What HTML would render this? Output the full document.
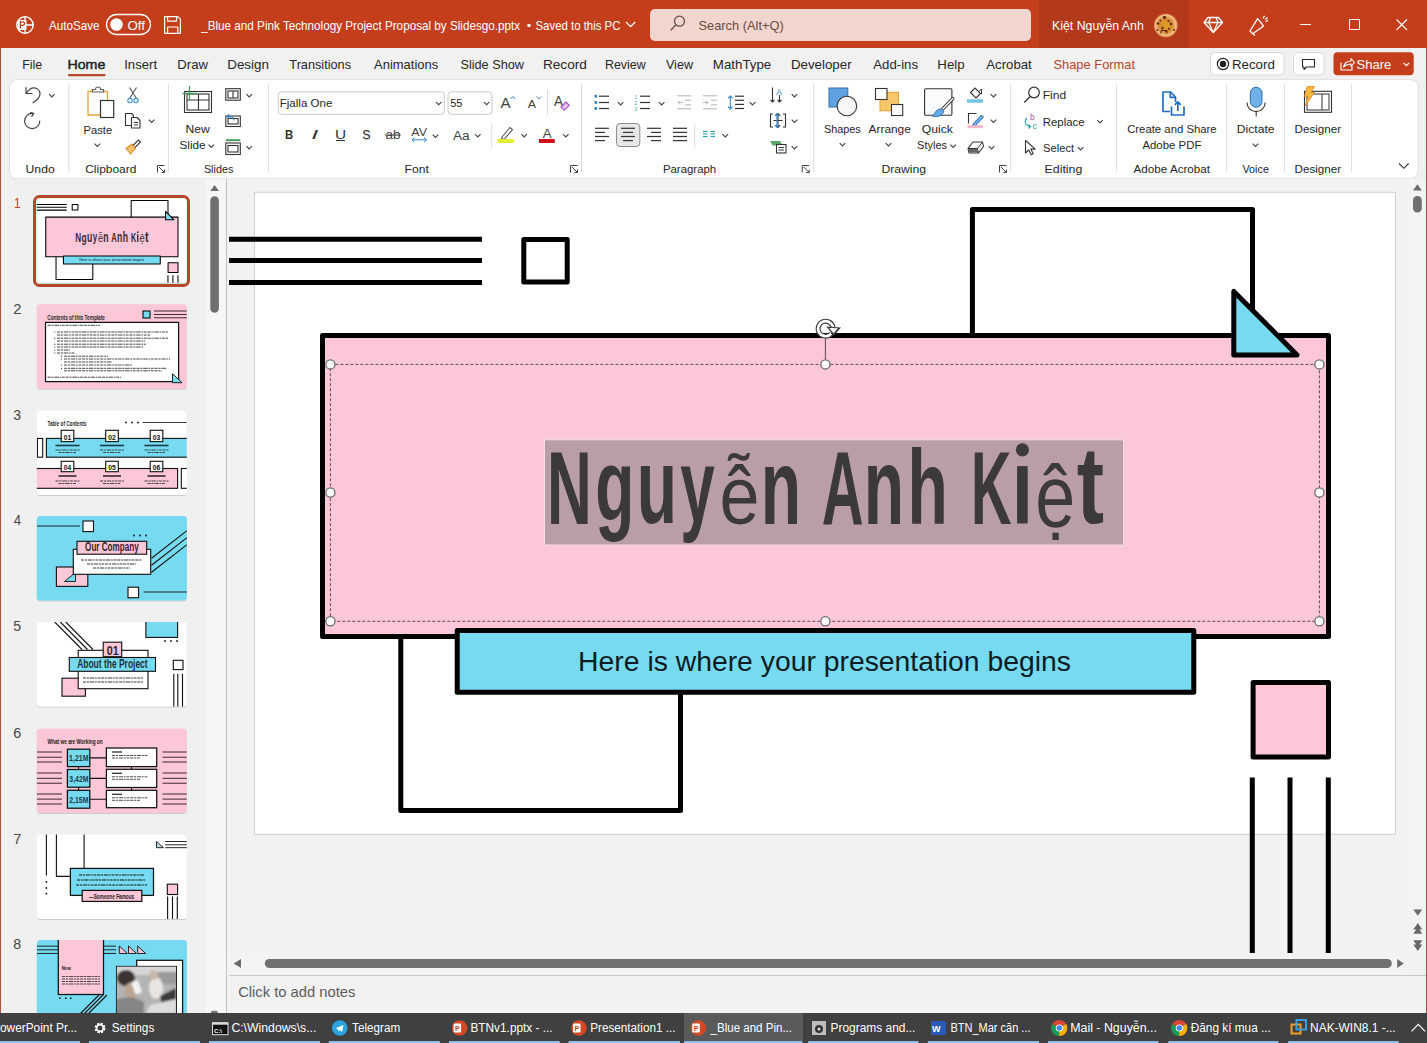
<!DOCTYPE html>
<html><head><meta charset="utf-8"><title>PowerPoint</title>
<style>
html,body{margin:0;padding:0;width:1427px;height:1043px;overflow:hidden;background:#f0f0f0}
svg{display:block;font-family:"Liberation Sans",sans-serif}
</style></head><body>
<svg width="1427" height="1043" viewBox="0 0 1427 1043">
<rect x="0" y="0" width="1427" height="1043" fill="#f0f0f0"/>
<rect x="0" y="0" width="1427" height="48" fill="#c43e1c"/>
<rect x="0" y="48" width="1" height="965" fill="#b0523a"/>
<rect x="1426" y="48" width="1" height="965" fill="#b0523a"/>
<g transform="translate(25,25)"><circle r="8.2" fill="none" stroke="#fff" stroke-width="1.5"/><path d="M0 -8.2V8.2M0 0H8.2" stroke="#fff" stroke-width="1.3"/><rect x="-7" y="-5" width="8.5" height="10" rx="1.2" fill="#fff"/><path d="M-4.6 3.4v-6.6h2.3a1.8 1.8 0 0 1 0 3.6h-2.3" fill="none" stroke="#c43e1c" stroke-width="1.3"/></g>
<text x="49" y="29.5" font-size="13" fill="#fff" textLength="50.54" lengthAdjust="spacingAndGlyphs" >AutoSave</text>
<rect x="106.5" y="14.5" width="44" height="20" rx="10" fill="none" stroke="#fff" stroke-width="1.3"/>
<circle cx="116.5" cy="24.5" r="6.3" fill="#fff"/>
<text x="127.4" y="29.5" font-size="13" fill="#fff" textLength="17.54" lengthAdjust="spacingAndGlyphs" >Off</text>
<g fill="none" stroke="#fff" stroke-width="1.2" stroke-linejoin="round"><path d="M164.6 16.6h13.2l2.6 2.6v14.2h-15.8z"/><path d="M167.6 16.6v4.6h9v-4.6M167.6 33.4v-6.4h10.2v6.4"/></g>
<text x="201.18" y="30" font-size="13" fill="#fff" textLength="318.97" lengthAdjust="spacingAndGlyphs" >_Blue and Pink Technology Project Proposal by Slidesgo.pptx</text>
<rect x="527.5" y="24" width="3" height="3" fill="#fff"/>
<text x="535.49" y="30" font-size="13" fill="#fff" textLength="84.95" lengthAdjust="spacingAndGlyphs" >Saved to this PC</text>
<path d="M626 22l4.6 4.6 4.6-4.6" fill="none" stroke="#fff" stroke-width="1.3"/>
<rect x="650" y="9" width="381" height="32" rx="5" fill="#f1d6cf"/>
<g fill="none" stroke="#6f4a40" stroke-width="1.3"><circle cx="679.5" cy="21.2" r="5"/><path d="M676 24.8l-5.2 5.4"/></g>
<text x="698.42" y="29.5" font-size="13.5" fill="#6f4a40" textLength="85.37" lengthAdjust="spacingAndGlyphs" >Search (Alt+Q)</text>
<rect x="1039" y="0" width="150" height="48" fill="#b3391b"/>
<text x="1052.01" y="29.5" font-size="13" fill="#fff" textLength="91.79" lengthAdjust="spacingAndGlyphs" >Kiệt Nguyễn Anh</text>
<defs><radialGradient id="av" cx="50%" cy="50%" r="50%"><stop offset="0" stop-color="#e0a020"/><stop offset=".55" stop-color="#d98a30"/><stop offset=".85" stop-color="#f0c088"/><stop offset="1" stop-color="#d9703a"/></radialGradient></defs><circle cx="1165.8" cy="25.4" r="12" fill="url(#av)"/>
<circle cx="1164.5" cy="17.3" r="1.6" fill="#5a2a08"/>
<circle cx="1160.2" cy="20.5" r="1" fill="#5a2a08"/>
<circle cx="1168.5" cy="21" r="1.1" fill="#5a2a08"/>
<circle cx="1171" cy="24" r="1.2" fill="#5a2a08"/>
<circle cx="1158" cy="23.5" r="1.3" fill="#5a2a08"/>
<circle cx="1162.5" cy="28" r="1.2" fill="#5a2a08"/>
<circle cx="1169" cy="28.8" r="1" fill="#5a2a08"/>
<circle cx="1174" cy="30" r="1" fill="#5a2a08"/>
<circle cx="1157.5" cy="30" r="1" fill="#5a2a08"/>
<circle cx="1166" cy="31.5" r="0.9" fill="#5a2a08"/>
<path d="M1161 33.5v-3h6v3" fill="none" stroke="#5a2a08" stroke-width="1"/>
<g fill="none" stroke="#fff" stroke-width="1.3" stroke-linejoin="round"><path d="M1208 17.5h10.5l4 5-9.2 10-9.3-10z"/><path d="M1204 22.5h18.5M1210.5 17.5l-1.8 5 4.6 10 4.6-10-1.8-5"/></g>
<g fill="none" stroke="#fff" stroke-width="1.3" stroke-linejoin="round"><path d="M1250 31l2.6 2.8 11-7.8-6-7.4z"/><path d="M1253 33.3l1.8 2.2"/><path d="M1263 18.5l1.6-2.6M1265.5 21.5l2.6-1.2M1265.3 19.5l2.2-2"/></g>
<rect x="1300" y="24" width="11" height="1" fill="#fff"/>
<rect x="1349.5" y="19.5" width="10" height="10" fill="none" stroke="#fff" stroke-width="1"/>
<path d="M1396.5 19.5l10.5 10.5M1407 19.5l-10.5 10.5" stroke="#fff" stroke-width="1.1"/>
<rect x="1" y="48" width="1425" height="31" fill="#f1f1f1"/>
<text x="22.21" y="69" font-size="13" fill="#262626" textLength="19.97" lengthAdjust="spacingAndGlyphs" >File</text>
<text x="67.46" y="69" font-size="13" fill="#1f1f1f" textLength="37.91" lengthAdjust="spacingAndGlyphs" stroke="#1f1f1f" stroke-width="0.45">Home</text>
<text x="124.22" y="69" font-size="13" fill="#262626" textLength="32.86" lengthAdjust="spacingAndGlyphs" >Insert</text>
<text x="177.35" y="69" font-size="13" fill="#262626" textLength="30.63" lengthAdjust="spacingAndGlyphs" >Draw</text>
<text x="227.23" y="69" font-size="13" fill="#262626" textLength="41.68" lengthAdjust="spacingAndGlyphs" >Design</text>
<text x="289.35" y="69" font-size="13" fill="#262626" textLength="61.68" lengthAdjust="spacingAndGlyphs" >Transitions</text>
<text x="374" y="69" font-size="13" fill="#262626" textLength="64.28" lengthAdjust="spacingAndGlyphs" >Animations</text>
<text x="460.43" y="69" font-size="13" fill="#262626" textLength="63.55" lengthAdjust="spacingAndGlyphs" >Slide Show</text>
<text x="542.91" y="69" font-size="13" fill="#262626" textLength="43.96" lengthAdjust="spacingAndGlyphs" >Record</text>
<text x="605.01" y="69" font-size="13" fill="#262626" textLength="40.68" lengthAdjust="spacingAndGlyphs" >Review</text>
<text x="665.94" y="69" font-size="13" fill="#262626" textLength="27.06" lengthAdjust="spacingAndGlyphs" >View</text>
<text x="712.84" y="69" font-size="13" fill="#262626" textLength="58.38" lengthAdjust="spacingAndGlyphs" >MathType</text>
<text x="790.93" y="69" font-size="13" fill="#262626" textLength="60.71" lengthAdjust="spacingAndGlyphs" >Developer</text>
<text x="873.3" y="69" font-size="13" fill="#262626" textLength="44.67" lengthAdjust="spacingAndGlyphs" >Add-ins</text>
<text x="937.34" y="69" font-size="13" fill="#262626" textLength="27.21" lengthAdjust="spacingAndGlyphs" >Help</text>
<text x="986.3" y="69" font-size="13" fill="#262626" textLength="45.48" lengthAdjust="spacingAndGlyphs" >Acrobat</text>
<rect x="68" y="74" width="37.5" height="2.2" rx="1" fill="#b7472a"/>
<text x="1053.42" y="69" font-size="13" fill="#b7472a" textLength="81.67" lengthAdjust="spacingAndGlyphs" >Shape Format</text>
<rect x="1210.5" y="52.5" width="73.5" height="22.5" rx="4" fill="#fff" stroke="#dadada"/>
<circle cx="1223" cy="64" r="5.6" fill="none" stroke="#1f1f1f" stroke-width="1.2"/><circle cx="1223" cy="64" r="3.2" fill="#1f1f1f"/>
<text x="1231.94" y="69" font-size="13" fill="#1f1f1f" textLength="42.91" lengthAdjust="spacingAndGlyphs" >Record</text>
<rect x="1293.5" y="52.5" width="30.5" height="22.5" rx="4" fill="#fff" stroke="#dadada"/>
<path d="M1302.5 59.5h12v7.5h-8l-2.5 2.5v-2.5h-1.5z" fill="none" stroke="#262626" stroke-width="1.1" stroke-linejoin="round"/>
<rect x="1333.5" y="52.3" width="80.2" height="23" rx="4" fill="#c43e1c"/>
<g fill="none" stroke="#fff" stroke-width="1.1" stroke-linejoin="round"><path d="M1341 62.5v7.5h11v-4"/><path d="M1343.5 67c1-4 4-6 7.5-6v-2.5l3.5 4-3.5 4v-2.5c-3 0-5.5 1-7.5 3z"/></g>
<text x="1356.41" y="69" font-size="13" fill="#fff" textLength="34.92" lengthAdjust="spacingAndGlyphs" >Share</text>
<path d="M1403.6 62.8l2.8 2.8 2.8-2.8" fill="none" stroke="#fff" stroke-width="1.2"/>
<rect x="9.5" y="79.5" width="1408.5" height="99.3" rx="8" fill="#fff" stroke="#e3e3e3" stroke-width="1"/>
<rect x="14" y="178.8" width="1400" height="1.4" fill="#dedede" opacity=".9"/>
<rect x="68.2" y="84" width="1" height="88" fill="#dcdcdc"/>
<rect x="167.9" y="84" width="1" height="88" fill="#dcdcdc"/>
<rect x="267.9" y="84" width="1" height="88" fill="#dcdcdc"/>
<rect x="581" y="84" width="1" height="88" fill="#dcdcdc"/>
<rect x="813.2" y="84" width="1" height="88" fill="#dcdcdc"/>
<rect x="1010.2" y="84" width="1" height="88" fill="#dcdcdc"/>
<rect x="1116.1" y="84" width="1" height="88" fill="#dcdcdc"/>
<rect x="1226.2" y="84" width="1" height="88" fill="#dcdcdc"/>
<rect x="1283.9" y="84" width="1" height="88" fill="#dcdcdc"/>
<rect x="1350.9" y="84" width="1" height="88" fill="#dcdcdc"/>
<text x="25.59" y="172.5" font-size="11.5" fill="#262626" textLength="29.11" lengthAdjust="spacingAndGlyphs" >Undo</text>
<text x="85.2" y="172.5" font-size="11.5" fill="#262626" textLength="51.18" lengthAdjust="spacingAndGlyphs" >Clipboard</text>
<text x="203.91" y="172.5" font-size="11.5" fill="#262626" textLength="29.45" lengthAdjust="spacingAndGlyphs" >Slides</text>
<text x="404.63" y="172.5" font-size="11.5" fill="#262626" textLength="24.14" lengthAdjust="spacingAndGlyphs" >Font</text>
<text x="662.89" y="172.5" font-size="11.5" fill="#262626" textLength="53.36" lengthAdjust="spacingAndGlyphs" >Paragraph</text>
<text x="881.42" y="172.5" font-size="11.5" fill="#262626" textLength="44.71" lengthAdjust="spacingAndGlyphs" >Drawing</text>
<text x="1044.61" y="172.5" font-size="11.5" fill="#262626" textLength="37.72" lengthAdjust="spacingAndGlyphs" >Editing</text>
<text x="1133.6" y="172.5" font-size="11.5" fill="#262626" textLength="76.47" lengthAdjust="spacingAndGlyphs" >Adobe Acrobat</text>
<text x="1242.45" y="172.5" font-size="11.5" fill="#262626" textLength="26.46" lengthAdjust="spacingAndGlyphs" >Voice</text>
<text x="1294.57" y="172.5" font-size="11.5" fill="#262626" textLength="46.63" lengthAdjust="spacingAndGlyphs" >Designer</text>
<g fill="none" stroke="#424242" stroke-width="1"><path d="M157.5 172.5v-7h7"/><path d="M159 167l5.5 5.5M161.5 172.5h3v-3"/></g>
<g fill="none" stroke="#424242" stroke-width="1"><path d="M570.5 172.5v-7h7"/><path d="M572 167l5.5 5.5M574.5 172.5h3v-3"/></g>
<g fill="none" stroke="#424242" stroke-width="1"><path d="M802.2 172.5v-7h7"/><path d="M803.7 167l5.5 5.5M806.2 172.5h3v-3"/></g>
<g fill="none" stroke="#424242" stroke-width="1"><path d="M999.5 172.5v-7h7"/><path d="M1001 167l5.5 5.5M1003.5 172.5h3v-3"/></g>
<g fill="none" stroke="#424242" stroke-width="1.2" stroke-linecap="round" stroke-linejoin="round">
<path d="M26 87.5v6h6"/><path d="M26.5 93.2c2-3.5 5-5.5 8-5.3 3.5.3 5.5 3 5.5 6 0 3-2 5.5-7 8.8"/>
<path d="M39.8 121a7.6 7.6 0 1 1-7.6-7.6h1.5"/><path d="M30.6 112.6l3 1-1.8 2.8"/>
</g>
<path d="M49 94.1l2.8 2.8 2.8 -2.8" fill="none" stroke="#424242" stroke-width="1.1"/>
<path d="M88 91.5h4v-1.5h11.5v1.5h4v23.5h-19.5z" fill="#fff" stroke="#e8a53a" stroke-width="1.3"/>
<path d="M92.5 92v-2.5h3a2.5 2.5 0 0 1 5 0h3v2.5z" fill="#fff" stroke="#616161" stroke-width="1.1"/>
<rect x="100.5" y="100.5" width="13.2" height="17" fill="#fff" stroke="#333" stroke-width="1.2"/>
<text x="83.61" y="133.8" font-size="11.5" fill="#262626" textLength="28.52" lengthAdjust="spacingAndGlyphs" >Paste</text>
<path d="M94.5 143.6l2.8 2.8 2.8 -2.8" fill="none" stroke="#424242" stroke-width="1.1"/>
<g fill="none" stroke-width="1.1"><path d="M129.5 87.5l7 11M136.5 87.5l-7 11" stroke="#555"/><circle cx="130" cy="100.5" r="2.2" stroke="#3b8ed8"/><circle cx="136" cy="100.5" r="2.2" stroke="#3b8ed8"/></g>
<g fill="#fff" stroke="#333" stroke-width="1.1" stroke-linejoin="round"><path d="M125.5 113.5h6l2 2v10h-8z"/><path d="M131.5 117.5h5.5l3 3v7.5h-8.5z"/><path d="M134 122.5h4M134 125h4"/></g>
<path d="M148.9 119.6l2.8 2.8 2.8 -2.8" fill="none" stroke="#424242" stroke-width="1.1"/>
<g stroke-linejoin="round"><path d="M126 148.5l6-4.5 3.5 4.5-5 5.5z" fill="#f6c36b" stroke="#e08a2e" stroke-width="1.1"/><path d="M133 145.5l5.5-5.5 2 2-5.5 5.5" fill="none" stroke="#444" stroke-width="1.1"/></g>
<g fill="none" stroke="#333" stroke-width="1.1"><rect x="184.5" y="91.5" width="27" height="21"/><rect x="187" y="94" width="22" height="16"/><path d="M198.5 94v16M187 100h22"/></g>
<path d="M189.5 86v14M182.5 93.5h14" stroke="#4e9b5e" stroke-width="1.3"/>
<text x="185.43" y="132.5" font-size="11.5" fill="#262626" textLength="24.32" lengthAdjust="spacingAndGlyphs" >New</text>
<text x="179.47" y="148.5" font-size="11.5" fill="#262626" textLength="26.04" lengthAdjust="spacingAndGlyphs" >Slide</text>
<path d="M208.5 144.6l2.8 2.8 2.8 -2.8" fill="none" stroke="#424242" stroke-width="1.1"/>
<g fill="none" stroke="#333" stroke-width="1.1"><rect x="225.8" y="88.7" width="14.5" height="11.5"/><rect x="228" y="91" width="10" height="7"/><path d="M233 91v7"/><rect x="225.8" y="116" width="14.5" height="10.5"/><rect x="228" y="118.5" width="10" height="5.5"/><rect x="225.8" y="143" width="14.5" height="11.5"/><rect x="228" y="145.5" width="10" height="6.5"/></g>
<path d="M227 116.5l2.2-2.5M227 116.5l2.6 1.8M227.5 116.5c3.5-.5 6 .5 6.5 4" fill="none" stroke="#3a85c7" stroke-width="1.1"/>
<rect x="225.8" y="139.2" width="14.5" height="2" fill="#4e9b5e"/>
<path d="M246.4 94.1l2.8 2.8 2.8 -2.8" fill="none" stroke="#424242" stroke-width="1.1"/>
<path d="M246.4 146.1l2.8 2.8 2.8 -2.8" fill="none" stroke="#424242" stroke-width="1.1"/>
<rect x="278.3" y="91.8" width="166" height="22.5" rx="3.5" fill="#fff" stroke="#c9c9c9"/>
<text x="279.78" y="106.6" font-size="11.8" fill="#262626" textLength="52.57" lengthAdjust="spacingAndGlyphs" >Fjalla One</text>
<path d="M435.9 101.9l2.8 2.8 2.8 -2.8" fill="none" stroke="#424242" stroke-width="1.1"/>
<rect x="448" y="91.8" width="44" height="22.5" rx="3.5" fill="#fff" stroke="#c9c9c9"/>
<text x="450.26" y="106.6" font-size="11.8" fill="#262626" textLength="12.2" lengthAdjust="spacingAndGlyphs" >55</text>
<path d="M483.8 101.9l2.8 2.8 2.8 -2.8" fill="none" stroke="#424242" stroke-width="1.1"/>
<text x="500.5" y="107.5" font-size="15" fill="#424242" textLength="10.13" lengthAdjust="spacingAndGlyphs" >A</text>
<path d="M510.5 99l2.3-2.5 2.3 2.5" fill="none" stroke="#3a85c7" stroke-width="1"/>
<text x="527.7" y="107.5" font-size="11.5" fill="#424242" textLength="8.23" lengthAdjust="spacingAndGlyphs" >A</text>
<path d="M536.5 96.5l2.3 2.5 2.3-2.5" fill="none" stroke="#5b7fa8" stroke-width="1"/>
<rect x="547" y="90" width="1" height="25" fill="#dcdcdc"/>
<text x="554" y="106" font-size="15" fill="#424242" textLength="9.03" lengthAdjust="spacingAndGlyphs" >A</text>
<path d="M561 107l5-5 3.3 3.3-5 5z" fill="#e6c4ef" stroke="#a24cc3" stroke-width="1.1"/>
<text x="285.06" y="138.7" font-size="12.5" fill="#333" font-weight="bold" textLength="8.17" lengthAdjust="spacingAndGlyphs" >B</text>
<text x="311.29" y="138.7" font-size="12.5" fill="#333" font-style="italic" textLength="7.04" lengthAdjust="spacingAndGlyphs" >I</text>
<text x="335.04" y="138.7" font-size="12.5" fill="#333" textLength="11.15" lengthAdjust="spacingAndGlyphs" >U</text>
<rect x="336" y="140" width="9" height="1" fill="#333"/>
<text x="362.64" y="139.5" font-size="12.5" fill="#bbb" textLength="8.24" lengthAdjust="spacingAndGlyphs" >S</text>
<text x="362.14" y="138.7" font-size="12.5" fill="#333" textLength="8.24" lengthAdjust="spacingAndGlyphs" >S</text>
<text x="385.46" y="138.7" font-size="12" fill="#444" textLength="15.12" lengthAdjust="spacingAndGlyphs" >ab</text>
<rect x="385" y="134.5" width="15.5" height="1.1" fill="#444"/>
<text x="411.3" y="135.5" font-size="11.5" fill="#444" textLength="15.76" lengthAdjust="spacingAndGlyphs" >AV</text>
<path d="M412 139.8h14.5M414.5 137.5l-2.5 2.3 2.5 2.3M424 137.5l2.5 2.3-2.5 2.3" fill="none" stroke="#3a85c7" stroke-width="1"/>
<path d="M432.7 134.6l2.8 2.8 2.8 -2.8" fill="none" stroke="#424242" stroke-width="1.1"/>
<text x="453" y="139.7" font-size="12.5" fill="#424242" textLength="16.64" lengthAdjust="spacingAndGlyphs" >Aa</text>
<path d="M475 134.1l2.8 2.8 2.8 -2.8" fill="none" stroke="#424242" stroke-width="1.1"/>
<rect x="491.2" y="122.7" width="1" height="25.3" fill="#dcdcdc"/>
<path d="M502 137l8-9.5 2.5 2.2-8 9.3h-3z" fill="#fff" stroke="#555" stroke-width="1.1" stroke-linejoin="round"/>
<rect x="497.4" y="139" width="16.4" height="4" fill="#e4ef3a"/>
<path d="M521.4 134.1l2.8 2.8 2.8 -2.8" fill="none" stroke="#424242" stroke-width="1.1"/>
<text x="542.8" y="137.8" font-size="12.5" fill="#424242" textLength="8.83" lengthAdjust="spacingAndGlyphs" >A</text>
<rect x="539" y="139" width="15.8" height="4" fill="#d0111b"/>
<path d="M563 134.1l2.8 2.8 2.8 -2.8" fill="none" stroke="#424242" stroke-width="1.1"/>
<rect x="594.5" y="94.9" width="2.6" height="2.6" fill="#2d7dc3"/>
<rect x="594.5" y="101.2" width="2.6" height="2.6" fill="#2d7dc3"/>
<rect x="594.5" y="107.2" width="2.6" height="2.6" fill="#2d7dc3"/>
<rect x="599" y="95.6" width="10" height="1.2" fill="#333"/><rect x="599" y="101.9" width="10" height="1.2" fill="#333"/><rect x="599" y="107.9" width="10" height="1.2" fill="#333"/>
<path d="M617.8 102.1l2.8 2.8 2.8 -2.8" fill="none" stroke="#424242" stroke-width="1.1"/>
<text x="634.5" y="98.5" font-size="4.5" fill="#2aa0a8">1</text><text x="634.5" y="104.5" font-size="4.5" fill="#2aa0a8">2</text><text x="634.5" y="110.5" font-size="4.5" fill="#2aa0a8">3</text>
<rect x="640" y="95.6" width="10" height="1.2" fill="#333"/><rect x="640" y="101.9" width="10" height="1.2" fill="#333"/><rect x="640" y="107.9" width="10" height="1.2" fill="#333"/>
<path d="M658.8 102.1l2.8 2.8 2.8 -2.8" fill="none" stroke="#424242" stroke-width="1.1"/>
<rect x="677" y="95.25" width="14" height="1.1" fill="#b9b9b9"/><rect x="685" y="99.65" width="6" height="1.1" fill="#b9b9b9"/><rect x="685" y="104.25" width="6" height="1.1" fill="#b9b9b9"/><rect x="677" y="108.25" width="14" height="1.1" fill="#b9b9b9"/>
<path d="M683 102.5h-5M680 100.5l-2 2 2 2" fill="none" stroke="#b9b9b9" stroke-width="1"/>
<rect x="703" y="95.25" width="14" height="1.1" fill="#b9b9b9"/><rect x="711" y="99.65" width="6" height="1.1" fill="#b9b9b9"/><rect x="711" y="104.25" width="6" height="1.1" fill="#b9b9b9"/><rect x="703" y="108.25" width="14" height="1.1" fill="#b9b9b9"/>
<path d="M703 102.5h5M706 100.5l2 2-2 2" fill="none" stroke="#b9b9b9" stroke-width="1"/>
<path d="M730.3 96v13M728 98.3l2.3-2.3 2.3 2.3M728 106.7l2.3 2.3 2.3-2.3" fill="none" stroke="#3a85c7" stroke-width="1.1"/>
<rect x="735" y="95.6" width="9" height="1.2" fill="#333"/><rect x="735" y="99.7" width="9" height="1.2" fill="#333"/><rect x="735" y="103.8" width="9" height="1.2" fill="#333"/><rect x="735" y="107.9" width="9" height="1.2" fill="#333"/>
<path d="M749.7 102.1l2.8 2.8 2.8 -2.8" fill="none" stroke="#424242" stroke-width="1.1"/>
<rect x="616.5" y="123.5" width="23.3" height="23" rx="3.5" fill="#e8e8e8" stroke="#8d8d8d" stroke-width="1"/>
<rect x="595" y="127.7" width="14" height="1.2" fill="#333"/><rect x="595" y="131.8" width="10" height="1.2" fill="#333"/><rect x="595" y="135.9" width="14" height="1.2" fill="#333"/><rect x="595" y="140" width="10" height="1.2" fill="#333"/>
<rect x="621" y="127.7" width="14" height="1.2" fill="#333"/><rect x="623" y="131.8" width="10" height="1.2" fill="#333"/><rect x="621" y="135.9" width="14" height="1.2" fill="#333"/><rect x="623" y="140" width="10" height="1.2" fill="#333"/>
<rect x="647" y="127.7" width="14" height="1.2" fill="#333"/><rect x="651" y="131.8" width="10" height="1.2" fill="#333"/><rect x="647" y="135.9" width="14" height="1.2" fill="#333"/><rect x="651" y="140" width="10" height="1.2" fill="#333"/>
<rect x="673" y="127.7" width="14" height="1.2" fill="#333"/><rect x="673" y="131.8" width="14" height="1.2" fill="#333"/><rect x="673" y="135.9" width="14" height="1.2" fill="#333"/><rect x="673" y="140" width="14" height="1.2" fill="#333"/>
<rect x="694.2" y="123" width="1" height="25" fill="#dcdcdc"/>
<rect x="703" y="130.95" width="4.5" height="1.1" fill="#2aa0a8"/><rect x="703" y="135.95" width="4.5" height="1.1" fill="#2aa0a8"/><rect x="710.5" y="130.95" width="4.5" height="1.1" fill="#2aa0a8"/><rect x="710.5" y="135.95" width="4.5" height="1.1" fill="#2aa0a8"/>
<rect x="703" y="133.45" width="4.5" height="1.1" fill="#2aa0a8"/><rect x="710.5" y="133.45" width="4.5" height="1.1" fill="#2aa0a8"/>
<path d="M722.5 134.1l2.8 2.8 2.8 -2.8" fill="none" stroke="#424242" stroke-width="1.1"/>
<path d="M772.5 87.5v14.5M770.5 100l2 2 2-2M779.5 95v7M777.5 100l2 2 2-2" fill="none" stroke="#333" stroke-width="1.1"/>
<text x="776.3" y="95" font-size="8.5" fill="#3a85c7">A</text>
<path d="M791.7 94.1l2.8 2.8 2.8 -2.8" fill="none" stroke="#424242" stroke-width="1.1"/>
<path d="M773 114h-2.5v13h2.5M783 114h2.5v13H783M778 113.5v14M775.8 115.8l2.2-2.2 2.2 2.2M775.8 125.2l2.2 2.2 2.2-2.2M773.5 120.5h9" fill="none" stroke="#333" stroke-width="1.1"/>
<path d="M777 113.5v14M774.8 115.8l2.2-2.2 2.2 2.2M774.8 125.2l2.2 2.2 2.2-2.2" fill="none" stroke="#3a85c7" stroke-width="1.1"/>
<path d="M791.7 119.6l2.8 2.8 2.8 -2.8" fill="none" stroke="#424242" stroke-width="1.1"/>
<path d="M770 141h10l2.5 4.5h-10z" fill="#5aab6a"/><rect x="776.5" y="144.5" width="9.5" height="8.5" fill="#fff" stroke="#333" stroke-width="1.1"/><path d="M778.5 147.5h5.5M778.5 150h5.5" stroke="#333" stroke-width="1"/>
<path d="M791.7 146.1l2.8 2.8 2.8 -2.8" fill="none" stroke="#424242" stroke-width="1.1"/>
<rect x="829" y="88" width="18.8" height="19" fill="#5ea3e0" stroke="#2c6db3" stroke-width="1"/>
<circle cx="846.9" cy="106" r="9.8" fill="#f7f7f7" stroke="#333" stroke-width="1.1"/>
<text x="823.91" y="132.5" font-size="11.5" fill="#262626" textLength="36.89" lengthAdjust="spacingAndGlyphs" >Shapes</text>
<path d="M839.7 143.1l2.8 2.8 2.8 -2.8" fill="none" stroke="#424242" stroke-width="1.1"/>
<rect x="880" y="92.3" width="18.5" height="18.5" fill="#f6c76a" stroke="#e0a43a" stroke-width="1"/>
<rect x="875.5" y="88.5" width="11.5" height="11" fill="#fff" stroke="#333" stroke-width="1.1"/>
<rect x="891.5" y="104.5" width="11.2" height="11" fill="#fff" stroke="#333" stroke-width="1.1"/>
<text x="868.6" y="132.5" font-size="11.5" fill="#262626" textLength="42.17" lengthAdjust="spacingAndGlyphs" >Arrange</text>
<path d="M885.7 143.1l2.8 2.8 2.8 -2.8" fill="none" stroke="#424242" stroke-width="1.1"/>
<rect x="924.6" y="88.7" width="27.3" height="26.5" rx="1" fill="#f9fbfd" stroke="#333" stroke-width="1.1"/>
<path d="M952.8 98.6L942.3 109.4" stroke="#333" stroke-width="3.4" stroke-linecap="round"/><path d="M952.8 98.6L942.3 109.4" stroke="#fff" stroke-width="1.4" stroke-linecap="round"/><path d="M943.2 110.3c-1.5-2-4.5-1.8-6.5.2-1.6 1.6-2 4-4.6 5.6 3.4 1.2 7.5.5 9.8-1.6 1.6-1.5 2.3-3 1.3-4.2z" fill="#64a8e6" stroke="#2c6db3" stroke-width=".9"/>
<text x="921.85" y="132.5" font-size="11.5" fill="#262626" textLength="31.06" lengthAdjust="spacingAndGlyphs" >Quick</text>
<text x="917.11" y="148.5" font-size="11.5" fill="#262626" textLength="29.86" lengthAdjust="spacingAndGlyphs" >Styles</text>
<path d="M950.4 144.6l2.8 2.8 2.8 -2.8" fill="none" stroke="#424242" stroke-width="1.1"/>
<path d="M970.5 92.5l4.5-4.5 5.5 5.5-4.5 4.5z" fill="#fff" stroke="#333" stroke-width="1.1"/><path d="M979 91.5l2.5-2.5v5" fill="none" stroke="#333" stroke-width="1"/>
<rect x="967" y="99.3" width="16" height="3.4" fill="#71c3e8"/>
<path d="M990.7 94.1l2.8 2.8 2.8 -2.8" fill="none" stroke="#424242" stroke-width="1.1"/>
<path d="M968.5 123.5v-10h8" fill="none" stroke="#333" stroke-width="1.1"/><path d="M973 124l8.5-9 2 2-8.5 9h-2z" fill="#6fb1e6" stroke="#2c6db3" stroke-width="1"/>
<rect x="967.5" y="125.2" width="15.5" height="3" fill="#f2b8c8"/>
<path d="M990.7 119.6l2.8 2.8 2.8 -2.8" fill="none" stroke="#424242" stroke-width="1.1"/>
<path d="M968 148.5l5-6.5h9.5l1 4.5-5 6.5h-9.5z" fill="#fff" stroke="#333" stroke-width="1.1" stroke-linejoin="round"/><path d="M968 148.5h9.5l1 4.5M977.5 148.5l5-6.5" fill="none" stroke="#333" stroke-width="1"/><path d="M968.3 149h9l.8 3.6h-9z" fill="#666"/>
<path d="M988.8 146.1l2.8 2.8 2.8 -2.8" fill="none" stroke="#424242" stroke-width="1.1"/>
<g fill="none" stroke="#333" stroke-width="1.2"><circle cx="1034" cy="92.5" r="5.3"/><path d="M1030.2 96.5l-6 6"/></g>
<text x="1042.74" y="99.3" font-size="11.8" fill="#262626" textLength="23.45" lengthAdjust="spacingAndGlyphs" >Find</text>
<text x="1030" y="120" font-size="8.5" fill="#b04fb0">b</text><text x="1032.5" y="129" font-size="8.5" fill="#2aa0a8">c</text>
<path d="M1027 118c-3 3-2 8 3.5 8.5M1028.5 124.5l2 2-2 2" fill="none" stroke="#2aa0a8" stroke-width="1.1"/>
<text x="1042.79" y="125.8" font-size="11.8" fill="#262626" textLength="41.71" lengthAdjust="spacingAndGlyphs" >Replace</text>
<path d="M1097.2 120.1l2.8 2.8 2.8 -2.8" fill="none" stroke="#424242" stroke-width="1.1"/>
<path d="M1025.5 140.5v12.5l3.2-3 2.5 4.7 2-1-2.4-4.6h4.5z" fill="#fff" stroke="#333" stroke-width="1.1" stroke-linejoin="round"/>
<text x="1043" y="151.7" font-size="11.8" fill="#262626" textLength="31.11" lengthAdjust="spacingAndGlyphs" >Select</text>
<path d="M1077.8 147.1l2.8 2.8 2.8 -2.8" fill="none" stroke="#424242" stroke-width="1.1"/>
<g fill="none" stroke="#1f6dc2" stroke-width="1.7" stroke-linejoin="round"><path d="M1170 111.5h-7v-19.5h7.5l5 5v5"/><path d="M1170.3 92.3v5h5"/><path d="M1171.5 106.5v8.5h12.5v-8.5M1177.8 111v-9M1174.8 104.8l3-3 3 3"/></g>
<text x="1127.13" y="132.5" font-size="11.5" fill="#262626" textLength="89.57" lengthAdjust="spacingAndGlyphs" >Create and Share</text>
<text x="1142.4" y="148.5" font-size="11.5" fill="#262626" textLength="59.05" lengthAdjust="spacingAndGlyphs" >Adobe PDF</text>
<rect x="1250.3" y="87.3" width="11.7" height="20" rx="5.8" fill="#6fb1e6" stroke="#2c6db3" stroke-width="1"/>
<path d="M1247 102.5a9.1 9.1 0 0 0 18.2 0M1256.2 111.6v4.8" fill="none" stroke="#333" stroke-width="1.1"/>
<text x="1236.73" y="132.5" font-size="11.5" fill="#262626" textLength="37.85" lengthAdjust="spacingAndGlyphs" >Dictate</text>
<path d="M1252.7 143.6l2.8 2.8 2.8 -2.8" fill="none" stroke="#424242" stroke-width="1.1"/>
<rect x="1304.5" y="91.3" width="27" height="21" fill="none" stroke="#333" stroke-width="1.1"/><rect x="1307" y="94" width="22" height="16" fill="none" stroke="#333" stroke-width="1"/><path d="M1322 94v16" stroke="#333" stroke-width="1"/>
<path d="M1307 86.5h7.5l-3.5 6h3.5l-9 13 2.5-9h-3.5z" fill="#f6b73c" stroke="#e08a2e" stroke-width=".8" stroke-linejoin="round"/>
<text x="1294.57" y="132.5" font-size="11.5" fill="#262626" textLength="46.63" lengthAdjust="spacingAndGlyphs" >Designer</text>
<path d="M1399 163.5l4.8 4.8 4.8-4.8" fill="none" stroke="#333" stroke-width="1.1"/>
<rect x="1" y="179" width="225" height="834" fill="#f0f0f0"/>
<rect x="205.4" y="179" width="20.6" height="834" fill="#f6f6f6"/>
<rect x="226" y="179" width="1" height="834" fill="#c2c2c2"/>
<path d="M210.3 191l4.3-6 4.3 6z" fill="#6b6b6b"/>
<rect x="210.3" y="196.3" width="8.6" height="116.4" rx="4.3" fill="#6f6f6f"/>
<path d="M210.5 1013l1.5-2.2h4.7l1.5 2.2z" fill="#777"/>
<rect x="227" y="179" width="1199" height="834" fill="#f2f2f2"/>
<rect x="1405" y="179" width="21" height="775" fill="#f3f3f3"/>
<rect x="254.5" y="192.3" width="1141" height="642" fill="#fff" stroke="#d0d0d0" stroke-width="1"/>
<g transform="translate(254.5 192.3)"><g fill="none" stroke="#000" stroke-width="5" stroke-linejoin="round"><path d="M-25.5 47H227.5"/><path d="M-25.5 68.1H227.5"/><path d="M-25.5 90.1H227.5"/><rect x="269.3" y="47.2" width="43.4" height="42.4"/><path d="M717.9 143.2V17.1H998V143.2"/></g><rect x="68" y="143.2" width="1006" height="301" fill="#fcc7d7" stroke="#000" stroke-width="5" stroke-linejoin="round"/><path d="M979.3 99.2V162.6H1042.5z" fill="#76dbf1" stroke="#000" stroke-width="5" stroke-linejoin="round"/><path d="M146.3 444.2V618.2H426V444.2" fill="none" stroke="#000" stroke-width="5" stroke-linejoin="round"/><rect x="202.7" y="438.2" width="736.6" height="61.8" fill="#76dbf1" stroke="#000" stroke-width="5" stroke-linejoin="round"/><rect x="998.6" y="490.2" width="75.4" height="74.4" fill="#fcc7d7" stroke="#000" stroke-width="5" stroke-linejoin="round"/><g stroke="#000" stroke-width="5"><path d="M997.8 585.3V762.5"/><path d="M1035.5 585.3V762.5"/><path d="M1073.8 585.3V762.5"/></g></g>
<rect x="544.5" y="439.8" width="579" height="105.2" fill="#ba9ea5" stroke="#f3dde3" stroke-width="1"/>
<text transform="matrix(0.31 0 0 0.52 547.01 523.5)" font-size="200" fill="#3b3939" font-weight="bold">N</text>
<text transform="matrix(0.32 0 0 0.51 595.15 521)" font-size="200" fill="#3b3939" font-weight="bold">g</text>
<text transform="matrix(0.33 0 0 0.54 636.82 522.92)" font-size="200" fill="#3b3939" font-weight="bold">u</text>
<text transform="matrix(0.31 0 0 0.52 680.37 520.71)" font-size="200" fill="#3b3939" font-weight="bold">y</text>
<text transform="matrix(0.36 0 0 0.41 719.43 523.39)" font-size="200" fill="#3b3939">ễ</text>
<text transform="matrix(0.33 0 0 0.54 760.66 523.5)" font-size="200" fill="#3b3939" font-weight="bold">n</text>
<text transform="matrix(0.29 0 0 0.52 821.67 523.7)" font-size="200" fill="#3b3939" font-weight="bold">A</text>
<text transform="matrix(0.33 0 0 0.55 863.86 523.7)" font-size="200" fill="#3b3939" font-weight="bold">n</text>
<text transform="matrix(0.33 0 0 0.53 907.59 523.7)" font-size="200" fill="#3b3939" font-weight="bold">h</text>
<text transform="matrix(0.28 0 0 0.52 970.98 523.7)" font-size="200" fill="#3b3939" font-weight="bold">K</text>
<rect x="1017.1" y="466.1" width="10.6" height="57.4" fill="#3b3939"/><circle cx="1022.4" cy="449.8" r="6.6" fill="#3b3939"/>
<text transform="matrix(0.36 0 0 0.44 1035.35 526.17)" font-size="200" fill="#3b3939">ệ</text>
<text transform="matrix(0.41 0 0 0.55 1076.68 523.1)" font-size="200" fill="#3b3939" font-weight="bold">t</text>
<text x="578.13" y="670.6" font-size="27.2" fill="#0d1b24" textLength="492.83" lengthAdjust="spacingAndGlyphs" >Here is where your presentation begins</text>
<rect x="330.4" y="364.4" width="989" height="256.9" fill="none" stroke="#5a4a4f" stroke-width="1" stroke-dasharray="3 2"/>
<path d="M825.4 338.5V359" stroke="#5a4a4f" stroke-width="1"/>
<circle cx="330.4" cy="364.4" r="4.6" fill="#fff" stroke="#6b6b6b" stroke-width="1.3"/>
<circle cx="825.4" cy="364.4" r="4.6" fill="#fff" stroke="#6b6b6b" stroke-width="1.3"/>
<circle cx="1319.4" cy="364.4" r="4.6" fill="#fff" stroke="#6b6b6b" stroke-width="1.3"/>
<circle cx="330.4" cy="492.5" r="4.6" fill="#fff" stroke="#6b6b6b" stroke-width="1.3"/>
<circle cx="1319.4" cy="492.5" r="4.6" fill="#fff" stroke="#6b6b6b" stroke-width="1.3"/>
<circle cx="330.4" cy="621.3" r="4.6" fill="#fff" stroke="#6b6b6b" stroke-width="1.3"/>
<circle cx="825.4" cy="621.3" r="4.6" fill="#fff" stroke="#6b6b6b" stroke-width="1.3"/>
<circle cx="1319.4" cy="621.3" r="4.6" fill="#fff" stroke="#6b6b6b" stroke-width="1.3"/>
<g fill="none"><path d="M831.3 333.6A7.5 7.5 0 1 1 833 327.3" stroke="#3d3d3d" stroke-width="5"/><path d="M831.3 333.6A7.5 7.5 0 1 1 833 327.3" stroke="#fff" stroke-width="2.6"/></g>
<path d="M826.3 326.6L841 327.4 833.8 335.8z" fill="#3d3d3d"/><path d="M829.2 327.9L837.8 328.3 833.7 333.2z" fill="#fff"/>
<defs>
<clipPath id="c1"><rect x="36.8" y="198.3" width="150" height="84.4" rx="3.5"/></clipPath>
<clipPath id="c2"><rect x="36.8" y="304.3" width="150" height="84.4" rx="3.5"/></clipPath>
<clipPath id="c3"><rect x="36.8" y="410.5" width="150" height="84.4" rx="3.5"/></clipPath>
<clipPath id="c4"><rect x="36.8" y="516" width="150" height="84.4" rx="3.5"/></clipPath>
<clipPath id="c5"><rect x="36.8" y="622" width="150" height="84.4" rx="3.5"/></clipPath>
<clipPath id="c6"><rect x="36.8" y="728.7" width="150" height="84.4" rx="3.5"/></clipPath>
<clipPath id="c7"><rect x="36.8" y="834.5" width="150" height="84.4" rx="3.5"/></clipPath>
<clipPath id="c8"><rect x="36.8" y="940.1" width="150" height="84.4" rx="3.5"/></clipPath>
<filter id="sh" x="-5%" y="-5%" width="110%" height="115%"><feDropShadow dx="0" dy="0.6" stdDeviation="0.7" flood-color="#000" flood-opacity=".25"/></filter>
</defs>
<text x="13.9" y="207.6" font-size="14" fill="#b7472a" textLength="6.65" lengthAdjust="spacingAndGlyphs" >1</text>
<rect x="36.8" y="198.3" width="150" height="84.4" rx="3.5" fill="#fff" filter="url(#sh)"/>
<text x="13.16" y="313.6" font-size="14" fill="#474747" textLength="8.19" lengthAdjust="spacingAndGlyphs" >2</text>
<rect x="36.8" y="304.3" width="150" height="84.4" rx="3.5" fill="#fcc7d7" filter="url(#sh)"/>
<text x="13.34" y="419.8" font-size="14" fill="#474747" textLength="7.84" lengthAdjust="spacingAndGlyphs" >3</text>
<rect x="36.8" y="410.5" width="150" height="84.4" rx="3.5" fill="#fff" filter="url(#sh)"/>
<text x="13.63" y="525.3" font-size="14" fill="#474747" textLength="7.38" lengthAdjust="spacingAndGlyphs" >4</text>
<rect x="36.8" y="516" width="150" height="84.4" rx="3.5" fill="#76dbf1" filter="url(#sh)"/>
<text x="13.34" y="631.3" font-size="14" fill="#474747" textLength="7.84" lengthAdjust="spacingAndGlyphs" >5</text>
<rect x="36.8" y="622" width="150" height="84.4" rx="3.5" fill="#fff" filter="url(#sh)"/>
<text x="13.18" y="738" font-size="14" fill="#474747" textLength="8.01" lengthAdjust="spacingAndGlyphs" >6</text>
<rect x="36.8" y="728.7" width="150" height="84.4" rx="3.5" fill="#fcc7d7" filter="url(#sh)"/>
<text x="13.16" y="843.8" font-size="14" fill="#474747" textLength="8.19" lengthAdjust="spacingAndGlyphs" >7</text>
<rect x="36.8" y="834.5" width="150" height="84.4" rx="3.5" fill="#fff" filter="url(#sh)"/>
<text x="13.26" y="949.4" font-size="14" fill="#474747" textLength="7.93" lengthAdjust="spacingAndGlyphs" >8</text>
<rect x="36.8" y="940.1" width="150" height="84.4" rx="3.5" fill="#76dbf1" filter="url(#sh)"/>
<g clip-path="url(#c1)"><g transform="translate(36.8 198.3) scale(0.13146)"><g fill="none" stroke="#000" stroke-width="8" stroke-linejoin="round"><path d="M-25.5 47H227.5"/><path d="M-25.5 68.1H227.5"/><path d="M-25.5 90.1H227.5"/><rect x="269.3" y="47.2" width="43.4" height="42.4"/><path d="M717.9 143.2V17.1H998V143.2"/></g><rect x="68" y="143.2" width="1006" height="301" fill="#fcc7d7" stroke="#000" stroke-width="8" stroke-linejoin="round"/><path d="M979.3 99.2V162.6H1042.5z" fill="#76dbf1" stroke="#000" stroke-width="8" stroke-linejoin="round"/><path d="M146.3 444.2V618.2H426V444.2" fill="none" stroke="#000" stroke-width="8" stroke-linejoin="round"/><rect x="202.7" y="438.2" width="736.6" height="61.8" fill="#76dbf1" stroke="#000" stroke-width="8" stroke-linejoin="round"/><rect x="998.6" y="490.2" width="75.4" height="74.4" fill="#fcc7d7" stroke="#000" stroke-width="8" stroke-linejoin="round"/><g stroke="#000" stroke-width="8"><path d="M997.8 585.3V762.5"/><path d="M1035.5 585.3V762.5"/><path d="M1073.8 585.3V762.5"/></g></g>
<g transform="translate(36.8 198.3) scale(0.13146) translate(-254.5 -192.3)">
<text transform="matrix(0.31 0 0 0.52 547.01 523.5)" font-size="200" fill="#3a2a30" font-weight="bold">N</text>
<text transform="matrix(0.32 0 0 0.51 595.15 521)" font-size="200" fill="#3a2a30" font-weight="bold">g</text>
<text transform="matrix(0.33 0 0 0.54 636.82 522.92)" font-size="200" fill="#3a2a30" font-weight="bold">u</text>
<text transform="matrix(0.31 0 0 0.52 680.37 520.71)" font-size="200" fill="#3a2a30" font-weight="bold">y</text>
<text transform="matrix(0.36 0 0 0.41 719.43 523.39)" font-size="200" fill="#3a2a30">ễ</text>
<text transform="matrix(0.33 0 0 0.54 760.66 523.5)" font-size="200" fill="#3a2a30" font-weight="bold">n</text>
<text transform="matrix(0.29 0 0 0.52 821.67 523.7)" font-size="200" fill="#3a2a30" font-weight="bold">A</text>
<text transform="matrix(0.33 0 0 0.55 863.86 523.7)" font-size="200" fill="#3a2a30" font-weight="bold">n</text>
<text transform="matrix(0.33 0 0 0.53 907.59 523.7)" font-size="200" fill="#3a2a30" font-weight="bold">h</text>
<text transform="matrix(0.28 0 0 0.52 970.98 523.7)" font-size="200" fill="#3a2a30" font-weight="bold">K</text>
<rect x="1017.1" y="466.1" width="10.6" height="57.4" fill="#3a2a30"/><circle cx="1022.4" cy="449.8" r="6.6" fill="#3a2a30"/>
<text transform="matrix(0.36 0 0 0.44 1035.35 526.17)" font-size="200" fill="#3a2a30">ệ</text>
<text transform="matrix(0.41 0 0 0.55 1076.68 523.1)" font-size="200" fill="#3a2a30" font-weight="bold">t</text>
<text x="578.13" y="670.6" font-size="27.2" fill="#0d1b24" textLength="492.83" lengthAdjust="spacingAndGlyphs" >Here is where your presentation begins</text>
</g></g>
<rect x="34.5" y="196.5" width="154" height="89" rx="5" fill="none" stroke="#b5482b" stroke-width="3"/>
<g clip-path="url(#c2)">
<text x="47.31" y="320" font-size="7" fill="#2a2a2a" font-weight="bold" textLength="57.65" lengthAdjust="spacingAndGlyphs" >Contents of this Template</text>
<rect x="45.5" y="322.4" width="133.1" height="59.2" fill="#fff" stroke="#111" stroke-width="1.25"/>
<rect x="143" y="311" width="7" height="7" fill="#76dbf1" stroke="#111" stroke-width="1.12"/>
<rect x="154" y="310.55" width="33" height="0.9" fill="#2a1a20"/>
<rect x="154" y="314.05" width="33" height="0.9" fill="#2a1a20"/>
<rect x="154" y="317.35" width="33" height="0.9" fill="#2a1a20"/>
<path d="M47.5 325.3H100" stroke="#333" stroke-width="0.9" stroke-dasharray="3.2 .8 2 .8 4.5 .8 1.6 .8 2.8 .8"/>
<path d="M57 332H168" stroke="#333" stroke-width="0.9" stroke-dasharray="3.2 .8 2 .8 4.5 .8 1.6 .8 2.8 .8"/>
<circle cx="54.8" cy="332" r=".6" fill="#222"/>
<path d="M57 335H150" stroke="#333" stroke-width="0.9" stroke-dasharray="3.2 .8 2 .8 4.5 .8 1.6 .8 2.8 .8"/>
<path d="M57 338.2H168" stroke="#333" stroke-width="0.9" stroke-dasharray="3.2 .8 2 .8 4.5 .8 1.6 .8 2.8 .8"/>
<circle cx="54.8" cy="338.2" r=".6" fill="#222"/>
<path d="M57 341H145" stroke="#333" stroke-width="0.9" stroke-dasharray="3.2 .8 2 .8 4.5 .8 1.6 .8 2.8 .8"/>
<path d="M57 344.2H146" stroke="#333" stroke-width="0.9" stroke-dasharray="3.2 .8 2 .8 4.5 .8 1.6 .8 2.8 .8"/>
<circle cx="54.8" cy="344.2" r=".6" fill="#222"/>
<path d="M57 347H143" stroke="#333" stroke-width="0.9" stroke-dasharray="3.2 .8 2 .8 4.5 .8 1.6 .8 2.8 .8"/>
<circle cx="54.8" cy="347" r=".6" fill="#222"/>
<path d="M57 350H70" stroke="#333" stroke-width="0.9" stroke-dasharray="3.2 .8 2 .8 4.5 .8 1.6 .8 2.8 .8"/>
<circle cx="54.8" cy="350" r=".6" fill="#222"/>
<path d="M57 353H75" stroke="#333" stroke-width="0.9" stroke-dasharray="3.2 .8 2 .8 4.5 .8 1.6 .8 2.8 .8"/>
<circle cx="54.8" cy="353" r=".6" fill="#222"/>
<path d="M64 356.2H108" stroke="#333" stroke-width="0.9" stroke-dasharray="3.2 .8 2 .8 4.5 .8 1.6 .8 2.8 .8"/>
<circle cx="61.5" cy="356.2" r=".6" fill="#222"/>
<path d="M64 359H170" stroke="#333" stroke-width="0.9" stroke-dasharray="3.2 .8 2 .8 4.5 .8 1.6 .8 2.8 .8"/>
<circle cx="61.5" cy="359" r=".6" fill="#222"/>
<path d="M64 362H112" stroke="#333" stroke-width="0.9" stroke-dasharray="3.2 .8 2 .8 4.5 .8 1.6 .8 2.8 .8"/>
<path d="M64 365H132" stroke="#333" stroke-width="0.9" stroke-dasharray="3.2 .8 2 .8 4.5 .8 1.6 .8 2.8 .8"/>
<circle cx="61.5" cy="365" r=".6" fill="#222"/>
<path d="M64 368.3H167" stroke="#333" stroke-width="0.9" stroke-dasharray="3.2 .8 2 .8 4.5 .8 1.6 .8 2.8 .8"/>
<circle cx="61.5" cy="368.3" r=".6" fill="#222"/>
<path d="M64 370.8H162" stroke="#333" stroke-width="0.9" stroke-dasharray="3.2 .8 2 .8 4.5 .8 1.6 .8 2.8 .8"/>
<path d="M47.5 377.2H121" stroke="#333" stroke-width="0.9" stroke-dasharray="3.2 .8 2 .8 4.5 .8 1.6 .8 2.8 .8"/>
<path d="M172.5 373.7v9h9.5z" fill="#76dbf1" stroke="#111" stroke-width="0.9"/>
</g>
<g clip-path="url(#c3)">
<text x="47.45" y="425.8" font-size="6.5" fill="#2a2a2a" font-weight="bold" textLength="38.93" lengthAdjust="spacingAndGlyphs" >Table of Contents</text>
<circle cx="126" cy="422.5" r="0.9" fill="#111"/>
<circle cx="132" cy="422.5" r="0.9" fill="#111"/>
<circle cx="138" cy="422.5" r="0.9" fill="#111"/>
<rect x="142.6" y="422.1" width="44.4" height="0.8" fill="#111"/>
<rect x="46.4" y="438.4" width="143.6" height="18.8" fill="#76dbf1" stroke="#111" stroke-width="1.12"/>
<rect x="37.4" y="438.4" width="5.3" height="18.8" fill="#fff" stroke="#111" stroke-width="1.12"/>
<rect x="30" y="468.5" width="147.6" height="19.8" fill="#fcc7d7" stroke="#111" stroke-width="1.12"/>
<rect x="181.3" y="468.5" width="10.7" height="19.8" fill="#fff" stroke="#111" stroke-width="1.12"/>
<rect x="61.2" y="430.3" width="12.6" height="11.3" fill="#fff" stroke="#111" stroke-width="1.12"/>
<text x="63.73" y="439.5" font-size="7" fill="#111" font-weight="bold" textLength="7.45" lengthAdjust="spacingAndGlyphs" >01</text>
<rect x="55.5" y="444.7" width="24" height="1.6" fill="#1a3a4a"/>
<path d="M55.5 450H79.5" stroke="#222" stroke-width="0.8" stroke-dasharray="3.2 .8 2 .8 4.5 .8 1.6 .8 2.8 .8"/>
<path d="M58.5 452.5H76.5" stroke="#222" stroke-width="0.8" stroke-dasharray="3.2 .8 2 .8 4.5 .8 1.6 .8 2.8 .8"/>
<rect x="105.7" y="430.3" width="12.6" height="11.3" fill="#fff" stroke="#111" stroke-width="1.12"/>
<text x="108.23" y="439.5" font-size="7" fill="#111" font-weight="bold" textLength="7.56" lengthAdjust="spacingAndGlyphs" >02</text>
<rect x="100" y="444.7" width="24" height="1.6" fill="#1a3a4a"/>
<path d="M100 450H124" stroke="#222" stroke-width="0.8" stroke-dasharray="3.2 .8 2 .8 4.5 .8 1.6 .8 2.8 .8"/>
<path d="M103 452.5H121" stroke="#222" stroke-width="0.8" stroke-dasharray="3.2 .8 2 .8 4.5 .8 1.6 .8 2.8 .8"/>
<rect x="150.2" y="430.3" width="12.6" height="11.3" fill="#fff" stroke="#111" stroke-width="1.12"/>
<text x="152.73" y="439.5" font-size="7" fill="#111" font-weight="bold" textLength="7.52" lengthAdjust="spacingAndGlyphs" >03</text>
<rect x="144.5" y="444.7" width="24" height="1.6" fill="#1a3a4a"/>
<path d="M144.5 450H168.5" stroke="#222" stroke-width="0.8" stroke-dasharray="3.2 .8 2 .8 4.5 .8 1.6 .8 2.8 .8"/>
<path d="M147.5 452.5H165.5" stroke="#222" stroke-width="0.8" stroke-dasharray="3.2 .8 2 .8 4.5 .8 1.6 .8 2.8 .8"/>
<rect x="61.2" y="461.3" width="12.6" height="10.4" fill="#fff" stroke="#111" stroke-width="1.12"/>
<text x="63.74" y="470.3" font-size="7" fill="#111" font-weight="bold" textLength="7.31" lengthAdjust="spacingAndGlyphs" >04</text>
<rect x="58.5" y="475.2" width="18" height="1.6" fill="#3a2a30"/>
<path d="M55.5 481H79.5" stroke="#222" stroke-width="0.8" stroke-dasharray="3.2 .8 2 .8 4.5 .8 1.6 .8 2.8 .8"/>
<path d="M58.5 483.5H76.5" stroke="#222" stroke-width="0.8" stroke-dasharray="3.2 .8 2 .8 4.5 .8 1.6 .8 2.8 .8"/>
<rect x="105.7" y="461.3" width="12.6" height="10.4" fill="#fff" stroke="#111" stroke-width="1.12"/>
<text x="108.23" y="470.3" font-size="7" fill="#111" font-weight="bold" textLength="7.45" lengthAdjust="spacingAndGlyphs" >05</text>
<rect x="103" y="475.2" width="18" height="1.6" fill="#3a2a30"/>
<path d="M100 481H124" stroke="#222" stroke-width="0.8" stroke-dasharray="3.2 .8 2 .8 4.5 .8 1.6 .8 2.8 .8"/>
<path d="M103 483.5H121" stroke="#222" stroke-width="0.8" stroke-dasharray="3.2 .8 2 .8 4.5 .8 1.6 .8 2.8 .8"/>
<rect x="150.2" y="461.3" width="12.6" height="10.4" fill="#fff" stroke="#111" stroke-width="1.12"/>
<text x="152.73" y="470.3" font-size="7" fill="#111" font-weight="bold" textLength="7.52" lengthAdjust="spacingAndGlyphs" >06</text>
<rect x="147.5" y="475.2" width="18" height="1.6" fill="#3a2a30"/>
<path d="M144.5 481H168.5" stroke="#222" stroke-width="0.8" stroke-dasharray="3.2 .8 2 .8 4.5 .8 1.6 .8 2.8 .8"/>
<path d="M147.5 483.5H165.5" stroke="#222" stroke-width="0.8" stroke-dasharray="3.2 .8 2 .8 4.5 .8 1.6 .8 2.8 .8"/>
</g>
<g clip-path="url(#c4)">
<rect x="36.8" y="525.55" width="43" height="0.9" fill="#111"/>
<rect x="83" y="521" width="10.5" height="10.6" fill="#fff" stroke="#111" stroke-width="1.12"/>
<circle cx="134" cy="535.5" r="0.9" fill="#111"/>
<circle cx="140" cy="535.5" r="0.9" fill="#111"/>
<circle cx="146" cy="535.5" r="0.9" fill="#111"/>
<rect x="56.4" y="567" width="31.4" height="19.4" fill="#fcc7d7" stroke="#111" stroke-width="1.12"/>
<path d="M64.5 581.5l11-9v9z" fill="#76dbf1" stroke="#111" stroke-width="0.9"/>
<rect x="73.3" y="549.3" width="77.4" height="25" fill="#fff" stroke="#111" stroke-width="1.12"/>
<rect x="77" y="541.3" width="69.7" height="12.9" fill="#fcc7d7" stroke="#111" stroke-width="1.12"/>
<text x="85.08" y="551" font-size="12" fill="#3a2228" font-weight="bold" textLength="53.58" lengthAdjust="spacingAndGlyphs" >Our Company</text>
<path d="M81 560H142" stroke="#222" stroke-width="0.9" stroke-dasharray="3.2 .8 2 .8 4.5 .8 1.6 .8 2.8 .8"/>
<path d="M87 564H136" stroke="#222" stroke-width="0.9" stroke-dasharray="3.2 .8 2 .8 4.5 .8 1.6 .8 2.8 .8"/>
<path d="M93 568H130" stroke="#222" stroke-width="0.9" stroke-dasharray="3.2 .8 2 .8 4.5 .8 1.6 .8 2.8 .8"/>
<path d="M151.5 558.2 L187 530.6" fill="none" stroke="#111" stroke-width="1.12"/>
<path d="M151.5 565.2 L187 537.6" fill="none" stroke="#111" stroke-width="1.12"/>
<path d="M151.5 572.2 L187 544.6" fill="none" stroke="#111" stroke-width="1.12"/>
<rect x="128" y="587.2" width="10.6" height="10.5" fill="#fff" stroke="#111" stroke-width="1.12"/>
<rect x="143.5" y="591.55" width="43.5" height="0.9" fill="#111"/>
</g>
<g clip-path="url(#c5)">
<path d="M54.8 622 L82 649.5" fill="none" stroke="#111" stroke-width="1.12"/>
<path d="M60.3 622 L87.5 649.5" fill="none" stroke="#111" stroke-width="1.12"/>
<path d="M65.8 622 L93 649.5" fill="none" stroke="#111" stroke-width="1.12"/>
<rect x="145.9" y="615" width="31.7" height="22.4" fill="#76dbf1" stroke="#111" stroke-width="1.12"/>
<circle cx="165" cy="641" r="0.9" fill="#111"/>
<circle cx="171" cy="641" r="0.9" fill="#111"/>
<circle cx="177" cy="641" r="0.9" fill="#111"/>
<rect x="62" y="678.2" width="23.4" height="18" fill="#fcc7d7" stroke="#111" stroke-width="1.12"/>
<rect x="78.2" y="650.3" width="69.8" height="38.4" fill="#fff" stroke="#111" stroke-width="1.12"/>
<rect x="103.2" y="642.2" width="18.5" height="14.5" fill="#fcc7d7" stroke="#111" stroke-width="1.12"/>
<text x="106.77" y="654.8" font-size="13" fill="#3a2228" font-weight="bold" textLength="12.03" lengthAdjust="spacingAndGlyphs" >01</text>
<rect x="69.3" y="657.5" width="86.2" height="13.8" fill="#76dbf1" stroke="#111" stroke-width="1.12"/>
<text x="77.19" y="667.8" font-size="12" fill="#16303c" font-weight="bold" textLength="70.43" lengthAdjust="spacingAndGlyphs" >About the Project</text>
<path d="M83 678H143" stroke="#222" stroke-width="0.9" stroke-dasharray="3.2 .8 2 .8 4.5 .8 1.6 .8 2.8 .8"/>
<path d="M83 682H143" stroke="#222" stroke-width="0.9" stroke-dasharray="3.2 .8 2 .8 4.5 .8 1.6 .8 2.8 .8"/>
<rect x="173.3" y="660.3" width="9.7" height="9.3" fill="#fff" stroke="#111" stroke-width="1.12"/>
<path d="M173.8 673.7 L173.8 708" fill="none" stroke="#111" stroke-width="1.12"/>
<path d="M177.8 673.7 L177.8 708" fill="none" stroke="#111" stroke-width="1.12"/>
<path d="M182.5 673.7 L182.5 708" fill="none" stroke="#111" stroke-width="1.12"/>
</g>
<g clip-path="url(#c6)">
<text x="47.5" y="744" font-size="6.5" fill="#2a1a20" font-weight="bold" textLength="55.18" lengthAdjust="spacingAndGlyphs" >What we are Working on</text>
<rect x="36.8" y="751.55" width="25.2" height="0.9" fill="#2a1a20"/>
<rect x="162.5" y="751.55" width="24.5" height="0.9" fill="#2a1a20"/>
<rect x="36.8" y="756.75" width="25.2" height="0.9" fill="#2a1a20"/>
<rect x="162.5" y="756.75" width="24.5" height="0.9" fill="#2a1a20"/>
<rect x="36.8" y="761.55" width="25.2" height="0.9" fill="#2a1a20"/>
<rect x="162.5" y="761.55" width="24.5" height="0.9" fill="#2a1a20"/>
<rect x="36.8" y="772.55" width="25.2" height="0.9" fill="#2a1a20"/>
<rect x="162.5" y="772.55" width="24.5" height="0.9" fill="#2a1a20"/>
<rect x="36.8" y="777.85" width="25.2" height="0.9" fill="#2a1a20"/>
<rect x="162.5" y="777.85" width="24.5" height="0.9" fill="#2a1a20"/>
<rect x="36.8" y="782.75" width="25.2" height="0.9" fill="#2a1a20"/>
<rect x="162.5" y="782.75" width="24.5" height="0.9" fill="#2a1a20"/>
<rect x="36.8" y="793.55" width="25.2" height="0.9" fill="#2a1a20"/>
<rect x="162.5" y="793.55" width="24.5" height="0.9" fill="#2a1a20"/>
<rect x="36.8" y="798.65" width="25.2" height="0.9" fill="#2a1a20"/>
<rect x="162.5" y="798.65" width="24.5" height="0.9" fill="#2a1a20"/>
<rect x="36.8" y="803.55" width="25.2" height="0.9" fill="#2a1a20"/>
<rect x="162.5" y="803.55" width="24.5" height="0.9" fill="#2a1a20"/>
<path d="M78.6 749 L78.6 808" fill="none" stroke="#111" stroke-width="1.12"/>
<path d="M131.5 748 L131.5 808" fill="none" stroke="#111" stroke-width="1.12"/>
<path d="M89.8 757.9 L106.4 757.9" fill="none" stroke="#111" stroke-width="1.12"/>
<rect x="67.4" y="749.2" width="22.4" height="17.4" fill="#76dbf1" stroke="#111" stroke-width="1.25"/>
<text x="69.08" y="761.2" font-size="9" fill="#1a3a4a" font-weight="bold" textLength="19.4" lengthAdjust="spacingAndGlyphs" >1,21M</text>
<path d="M89.8 778.35 L106.4 778.35" fill="none" stroke="#111" stroke-width="1.12"/>
<rect x="67.4" y="769.5" width="22.4" height="17.7" fill="#76dbf1" stroke="#111" stroke-width="1.25"/>
<text x="69.33" y="781.65" font-size="9" fill="#1a3a4a" font-weight="bold" textLength="19.15" lengthAdjust="spacingAndGlyphs" >3,42M</text>
<path d="M89.8 799.25 L106.4 799.25" fill="none" stroke="#111" stroke-width="1.12"/>
<rect x="67.4" y="790.3" width="22.4" height="17.9" fill="#76dbf1" stroke="#111" stroke-width="1.25"/>
<text x="69.26" y="802.55" font-size="9" fill="#1a3a4a" font-weight="bold" textLength="19.22" lengthAdjust="spacingAndGlyphs" >2,15M</text>
<rect x="106.4" y="748" width="50.3" height="18.6" fill="#fff" stroke="#111" stroke-width="1.25"/>
<rect x="112" y="751.35" width="10" height="1.3" fill="#333"/>
<path d="M112 755.5H148" stroke="#222" stroke-width="0.8" stroke-dasharray="3.2 .8 2 .8 4.5 .8 1.6 .8 2.8 .8"/>
<path d="M112 758H140" stroke="#222" stroke-width="0.8" stroke-dasharray="3.2 .8 2 .8 4.5 .8 1.6 .8 2.8 .8"/>
<rect x="106.4" y="769.3" width="50.3" height="18.2" fill="#fff" stroke="#111" stroke-width="1.25"/>
<rect x="112" y="772.65" width="10" height="1.3" fill="#333"/>
<path d="M112 776.8H148" stroke="#222" stroke-width="0.8" stroke-dasharray="3.2 .8 2 .8 4.5 .8 1.6 .8 2.8 .8"/>
<path d="M112 779.3H140" stroke="#222" stroke-width="0.8" stroke-dasharray="3.2 .8 2 .8 4.5 .8 1.6 .8 2.8 .8"/>
<rect x="106.4" y="790.3" width="50.3" height="17.4" fill="#fff" stroke="#111" stroke-width="1.25"/>
<rect x="112" y="793.65" width="10" height="1.3" fill="#333"/>
<path d="M112 797.8H148" stroke="#222" stroke-width="0.8" stroke-dasharray="3.2 .8 2 .8 4.5 .8 1.6 .8 2.8 .8"/>
<path d="M112 800.3H140" stroke="#222" stroke-width="0.8" stroke-dasharray="3.2 .8 2 .8 4.5 .8 1.6 .8 2.8 .8"/>
</g>
<g clip-path="url(#c7)">
<path d="M46.4 834 L46.4 875.6" fill="none" stroke="#111" stroke-width="1.12"/>
<circle cx="46.4" cy="882" r="0.9" fill="#111"/>
<circle cx="46.4" cy="888" r="0.9" fill="#111"/>
<circle cx="46.4" cy="893.7" r="0.9" fill="#111"/>
<path d="M56.4 834 L56.4 876.4 L70.6 876.4" fill="none" stroke="#111" stroke-width="1.12"/>
<path d="M84.1 834 L84.1 868.4" fill="none" stroke="#111" stroke-width="1.12"/>
<rect x="70.4" y="868.4" width="83.1" height="27" fill="#76dbf1" stroke="#111" stroke-width="1.25"/>
<path d="M79 875H144" stroke="#1a1a1a" stroke-width="1.1" stroke-dasharray="3.2 .8 2 .8 4.5 .8 1.6 .8 2.8 .8"/>
<path d="M77 880H146" stroke="#1a1a1a" stroke-width="1.1" stroke-dasharray="3.2 .8 2 .8 4.5 .8 1.6 .8 2.8 .8"/>
<path d="M76 885H147" stroke="#1a1a1a" stroke-width="1.1" stroke-dasharray="3.2 .8 2 .8 4.5 .8 1.6 .8 2.8 .8"/>
<rect x="82.2" y="890.4" width="59.6" height="11" fill="#fcc7d7" stroke="#111" stroke-width="1.25"/>
<text x="89" y="899" font-size="7.5" fill="#2a1a20" font-weight="bold" textLength="45.2" lengthAdjust="spacingAndGlyphs" >—Someone Famous</text>
<path d="M156.5 841.5v6.2h7z" fill="#b9dde0" stroke="#111" stroke-width="0.9"/>
<rect x="165.2" y="841.05" width="21.8" height="0.9" fill="#111"/>
<rect x="165.2" y="844.35" width="21.8" height="0.9" fill="#111"/>
<rect x="165.2" y="847.25" width="21.8" height="0.9" fill="#111"/>
<rect x="167.3" y="884.2" width="10.3" height="10.3" fill="#fcc7d7" stroke="#111" stroke-width="1.12"/>
<path d="M167.6 896.6 L167.6 920" fill="none" stroke="#111" stroke-width="1.12"/>
<path d="M172.5 896.6 L172.5 920" fill="none" stroke="#111" stroke-width="1.12"/>
<path d="M177.3 896.6 L177.3 920" fill="none" stroke="#111" stroke-width="1.12"/>
</g>
<g clip-path="url(#c8)">
<rect x="36.8" y="945.65" width="21.5" height="0.9" fill="#111"/>
<rect x="103.5" y="945.65" width="12.5" height="0.9" fill="#111"/>
<rect x="36.8" y="949.35" width="21.5" height="0.9" fill="#111"/>
<rect x="103.5" y="949.35" width="12.5" height="0.9" fill="#111"/>
<rect x="36.8" y="952.95" width="21.5" height="0.9" fill="#111"/>
<rect x="103.5" y="952.95" width="12.5" height="0.9" fill="#111"/>
<path d="M119.3 946v7.5h8z" fill="#fcc7d7" stroke="#111" stroke-width="0.9"/>
<path d="M128.5 946v7.5h8z" fill="#fcc7d7" stroke="#111" stroke-width="0.9"/>
<path d="M137.7 946v7.5h8z" fill="#fcc7d7" stroke="#111" stroke-width="0.9"/>
<rect x="58.3" y="930" width="45.2" height="64.5" fill="#fcc7d7" stroke="#111" stroke-width="1.25"/>
<text x="61.71" y="970" font-size="5.5" fill="#2a1a20" font-weight="bold" textLength="9.27" lengthAdjust="spacingAndGlyphs" >Now</text>
<path d="M62 976.5H100" stroke="#222" stroke-width="0.8" stroke-dasharray="3.2 .8 2 .8 4.5 .8 1.6 .8 2.8 .8"/>
<path d="M62 979H100" stroke="#222" stroke-width="0.8" stroke-dasharray="3.2 .8 2 .8 4.5 .8 1.6 .8 2.8 .8"/>
<path d="M62 981.5H100" stroke="#222" stroke-width="0.8" stroke-dasharray="3.2 .8 2 .8 4.5 .8 1.6 .8 2.8 .8"/>
<path d="M62 984H100" stroke="#222" stroke-width="0.8" stroke-dasharray="3.2 .8 2 .8 4.5 .8 1.6 .8 2.8 .8"/>
<rect x="59" y="997.5" width="1.5" height="1.5" fill="#111"/>
<rect x="65" y="997.5" width="1.5" height="1.5" fill="#111"/>
<rect x="70" y="997.5" width="1.5" height="1.5" fill="#111"/>
<path d="M99 995 L80 1014" fill="none" stroke="#111" stroke-width="1.12"/>
<path d="M103 995 L84 1014" fill="none" stroke="#111" stroke-width="1.12"/>
<path d="M107 995 L88 1014" fill="none" stroke="#111" stroke-width="1.12"/>
<rect x="136.7" y="960.3" width="45.9" height="59.7" fill="#fff" stroke="#111" stroke-width="1.25"/>
<rect x="116.4" y="966.3" width="60.1" height="50" fill="#9a9a9a" stroke="#111" stroke-width="0.9"/>
<defs><clipPath id="ph"><rect x="116.9" y="966.8" width="59.1" height="49"/></clipPath><filter id="bl"><feGaussianBlur stdDeviation="1.2"/></filter></defs>
<g clip-path="url(#ph)"><g filter="url(#bl)"><rect x="110" y="960" width="70" height="60" fill="#b4b4b4"/><rect x="110" y="960" width="70" height="15" fill="#d6d6d6"/><rect x="150" y="972" width="30" height="12" fill="#9a9a9a"/><ellipse cx="156" cy="988" rx="7" ry="11" fill="#e9e6e2"/><circle cx="154" cy="975" r="4.5" fill="#c9b8a8"/><path d="M160 996l16-8v20l-13 3z" fill="#3a3a3a"/><path d="M150 1005l26-6v14h-30z" fill="#dcdcdc"/><ellipse cx="126" cy="978" rx="9" ry="8" fill="#3b3330"/><ellipse cx="131" cy="991" rx="6.5" ry="8.5" fill="#b9a392"/><path d="M116 1000c8-4 20-4 28 2v12h-28z" fill="#858585"/><rect x="133" y="981" width="7" height="13" rx="1.5" fill="#f4f4f4" transform="rotate(-20 136 987)"/></g></g>
</g>
<path d="M1413 190.4l4.4-6.2 4.4 6.2z" fill="#6b6b6b"/>
<rect x="1413" y="196" width="8.8" height="16.6" rx="4.4" fill="#6f6f6f"/>
<path d="M1413.3 909.5h9l-4.5 6.3z" fill="#6b6b6b"/>
<path d="M1413.3 929.5l4.5-6.5 4.5 6.5zM1413.3 933.8l4.5-6.5 4.5 6.5z" fill="#666"/>
<path d="M1413.3 940.3l4.5 6.5 4.5-6.5zM1413.3 944.5l4.5 6.5 4.5-6.5z" fill="#666"/>
<rect x="227" y="953" width="1178" height="21" fill="#f3f3f3"/>
<path d="M241 959v9l-7.3-4.5z" fill="#6b6b6b"/>
<rect x="264.8" y="959" width="1127" height="9" rx="4.5" fill="#707070"/>
<path d="M1397.2 959v9l6.5-4.5z" fill="#6b6b6b"/>
<rect x="229" y="975" width="1197" height="1" fill="#c8c8c8"/>
<text x="238.16" y="996.8" font-size="14.5" fill="#5c5c5c" textLength="117.14" lengthAdjust="spacingAndGlyphs" >Click to add notes</text>
<rect x="0" y="1013" width="1427" height="30" fill="#3f403f"/>
<rect x="684" y="1013" width="119" height="28" fill="#5a5a5a"/>
<rect x="0" y="1041" width="80" height="2.4" fill="#8dbde8"/>
<rect x="89" y="1041" width="111" height="2.4" fill="#8dbde8"/>
<rect x="209" y="1041" width="111" height="2.4" fill="#8dbde8"/>
<rect x="328.8" y="1041" width="111" height="2.4" fill="#8dbde8"/>
<rect x="449" y="1041" width="110.7" height="2.4" fill="#8dbde8"/>
<rect x="568.5" y="1041" width="111.5" height="2.4" fill="#8dbde8"/>
<rect x="684" y="1041" width="118.4" height="2.4" fill="#8dbde8"/>
<rect x="808.2" y="1041" width="110.3" height="2.4" fill="#8dbde8"/>
<rect x="927.8" y="1041" width="111.2" height="2.4" fill="#8dbde8"/>
<rect x="1048" y="1041" width="110.5" height="2.4" fill="#8dbde8"/>
<rect x="1168.3" y="1041" width="110.2" height="2.4" fill="#8dbde8"/>
<rect x="1288.2" y="1041" width="110.5" height="2.4" fill="#8dbde8"/>
<text x="0.03" y="1032.2" font-size="12.5" fill="#fff" textLength="77.08" lengthAdjust="spacingAndGlyphs" >owerPoint Pr...</text>
<text x="111.77" y="1032.2" font-size="12.5" fill="#fff" textLength="42.52" lengthAdjust="spacingAndGlyphs" >Settings</text>
<text x="231.39" y="1032.2" font-size="12.5" fill="#fff" textLength="85.02" lengthAdjust="spacingAndGlyphs" >C:\Windows\s...</text>
<text x="352.07" y="1032.2" font-size="12.5" fill="#fff" textLength="48.17" lengthAdjust="spacingAndGlyphs" >Telegram</text>
<text x="470.45" y="1032.2" font-size="12.5" fill="#fff" textLength="82.23" lengthAdjust="spacingAndGlyphs" >BTNv1.pptx - ...</text>
<text x="590.26" y="1032.2" font-size="12.5" fill="#fff" textLength="85.22" lengthAdjust="spacingAndGlyphs" >Presentation1 ...</text>
<text x="710.57" y="1032.2" font-size="12.5" fill="#fff" textLength="81.47" lengthAdjust="spacingAndGlyphs" >_Blue and Pin...</text>
<text x="830.55" y="1032.2" font-size="12.5" fill="#fff" textLength="84.78" lengthAdjust="spacingAndGlyphs" >Programs and...</text>
<text x="950.42" y="1032.2" font-size="12.5" fill="#fff" textLength="80.13" lengthAdjust="spacingAndGlyphs" >BTN_Mar căn ...</text>
<text x="1070.21" y="1032.2" font-size="12.5" fill="#fff" textLength="86.74" lengthAdjust="spacingAndGlyphs" >Mail - Nguyễn...</text>
<text x="1190.74" y="1032.2" font-size="12.5" fill="#fff" textLength="80.13" lengthAdjust="spacingAndGlyphs" >Đăng kí mua ...</text>
<text x="1310.05" y="1032.2" font-size="12.5" fill="#fff" textLength="85.56" lengthAdjust="spacingAndGlyphs" >NAK-WIN8.1 -...</text>
<g transform="translate(100 1028)"><circle r="4.2" fill="none" stroke="#fff" stroke-width="2.4" stroke-dasharray="2.2 1.1"/><circle r="3.2" fill="none" stroke="#fff" stroke-width="1.4"/><circle r="1.3" fill="#3a3a3a"/></g>
<rect x="212.5" y="1022.7" width="15.5" height="12" fill="#111" stroke="#ddd" stroke-width="1"/><rect x="212.5" y="1022.7" width="15.5" height="2" fill="#ddd"/><text x="214" y="1032.5" font-size="6" fill="#fff" font-weight="bold">C:\</text>
<circle cx="339.8" cy="1028" r="7.8" fill="#2aa3df"/><path d="M335.5 1028.2l8-3.2-1.5 7-2.5-2-1.5 1.4v-2.2z" fill="#fff"/>
<circle cx="459.6" cy="1028" r="7.8" fill="#d24726"/><rect x="453.6" y="1023.5" width="7.5" height="9" rx="1" fill="#fff"/><text x="455" y="1031" font-size="7" font-weight="bold" fill="#c43e1c">P</text>
<circle cx="579" cy="1028" r="7.8" fill="#d24726"/><rect x="573" y="1023.5" width="7.5" height="9" rx="1" fill="#fff"/><text x="574.4" y="1031" font-size="7" font-weight="bold" fill="#c43e1c">P</text>
<circle cx="698.3" cy="1028" r="7.8" fill="#d24726"/><rect x="692.3" y="1023.5" width="7.5" height="9" rx="1" fill="#fff"/><text x="693.7" y="1031" font-size="7" font-weight="bold" fill="#c43e1c">P</text>
<rect x="812" y="1021" width="14" height="14" fill="#bdbdbd"/><circle cx="819" cy="1029" r="4" fill="#333"/><circle cx="819" cy="1029" r="1.5" fill="#ddd"/>
<rect x="931" y="1021" width="15" height="14" rx="2" fill="#2b5bb8"/><text x="932" y="1032" font-size="9" font-weight="bold" fill="#fff">W</text>
<circle cx="1059.3" cy="1028" r="8" fill="#db4437"/><path d="M1059.3 1028 L1059.3 1036 A8 8 0 0 1 1052.4 1024z" fill="#0f9d58"/><path d="M1059.3 1028 L1066.2 1024 A8 8 0 0 1 1059.3 1036z" fill="#f4b400"/><circle cx="1059.3" cy="1028" r="3.6" fill="#fff"/><circle cx="1059.3" cy="1028" r="2.7" fill="#4285f4"/>
<circle cx="1179.3" cy="1028" r="8" fill="#db4437"/><path d="M1179.3 1028 L1179.3 1036 A8 8 0 0 1 1172.4 1024z" fill="#0f9d58"/><path d="M1179.3 1028 L1186.2 1024 A8 8 0 0 1 1179.3 1036z" fill="#f4b400"/><circle cx="1179.3" cy="1028" r="3.6" fill="#fff"/><circle cx="1179.3" cy="1028" r="2.7" fill="#4285f4"/>
<rect x="1291.5" y="1024.5" width="9" height="9" fill="none" stroke="#f0a030" stroke-width="2"/><rect x="1296.5" y="1020" width="9.5" height="9.5" fill="none" stroke="#3aa0e0" stroke-width="2"/>
<path d="M1411.5 1031.4l6.8-7 6.8 7" fill="none" stroke="#fff" stroke-width="1.2"/>
</svg>
</body></html>
